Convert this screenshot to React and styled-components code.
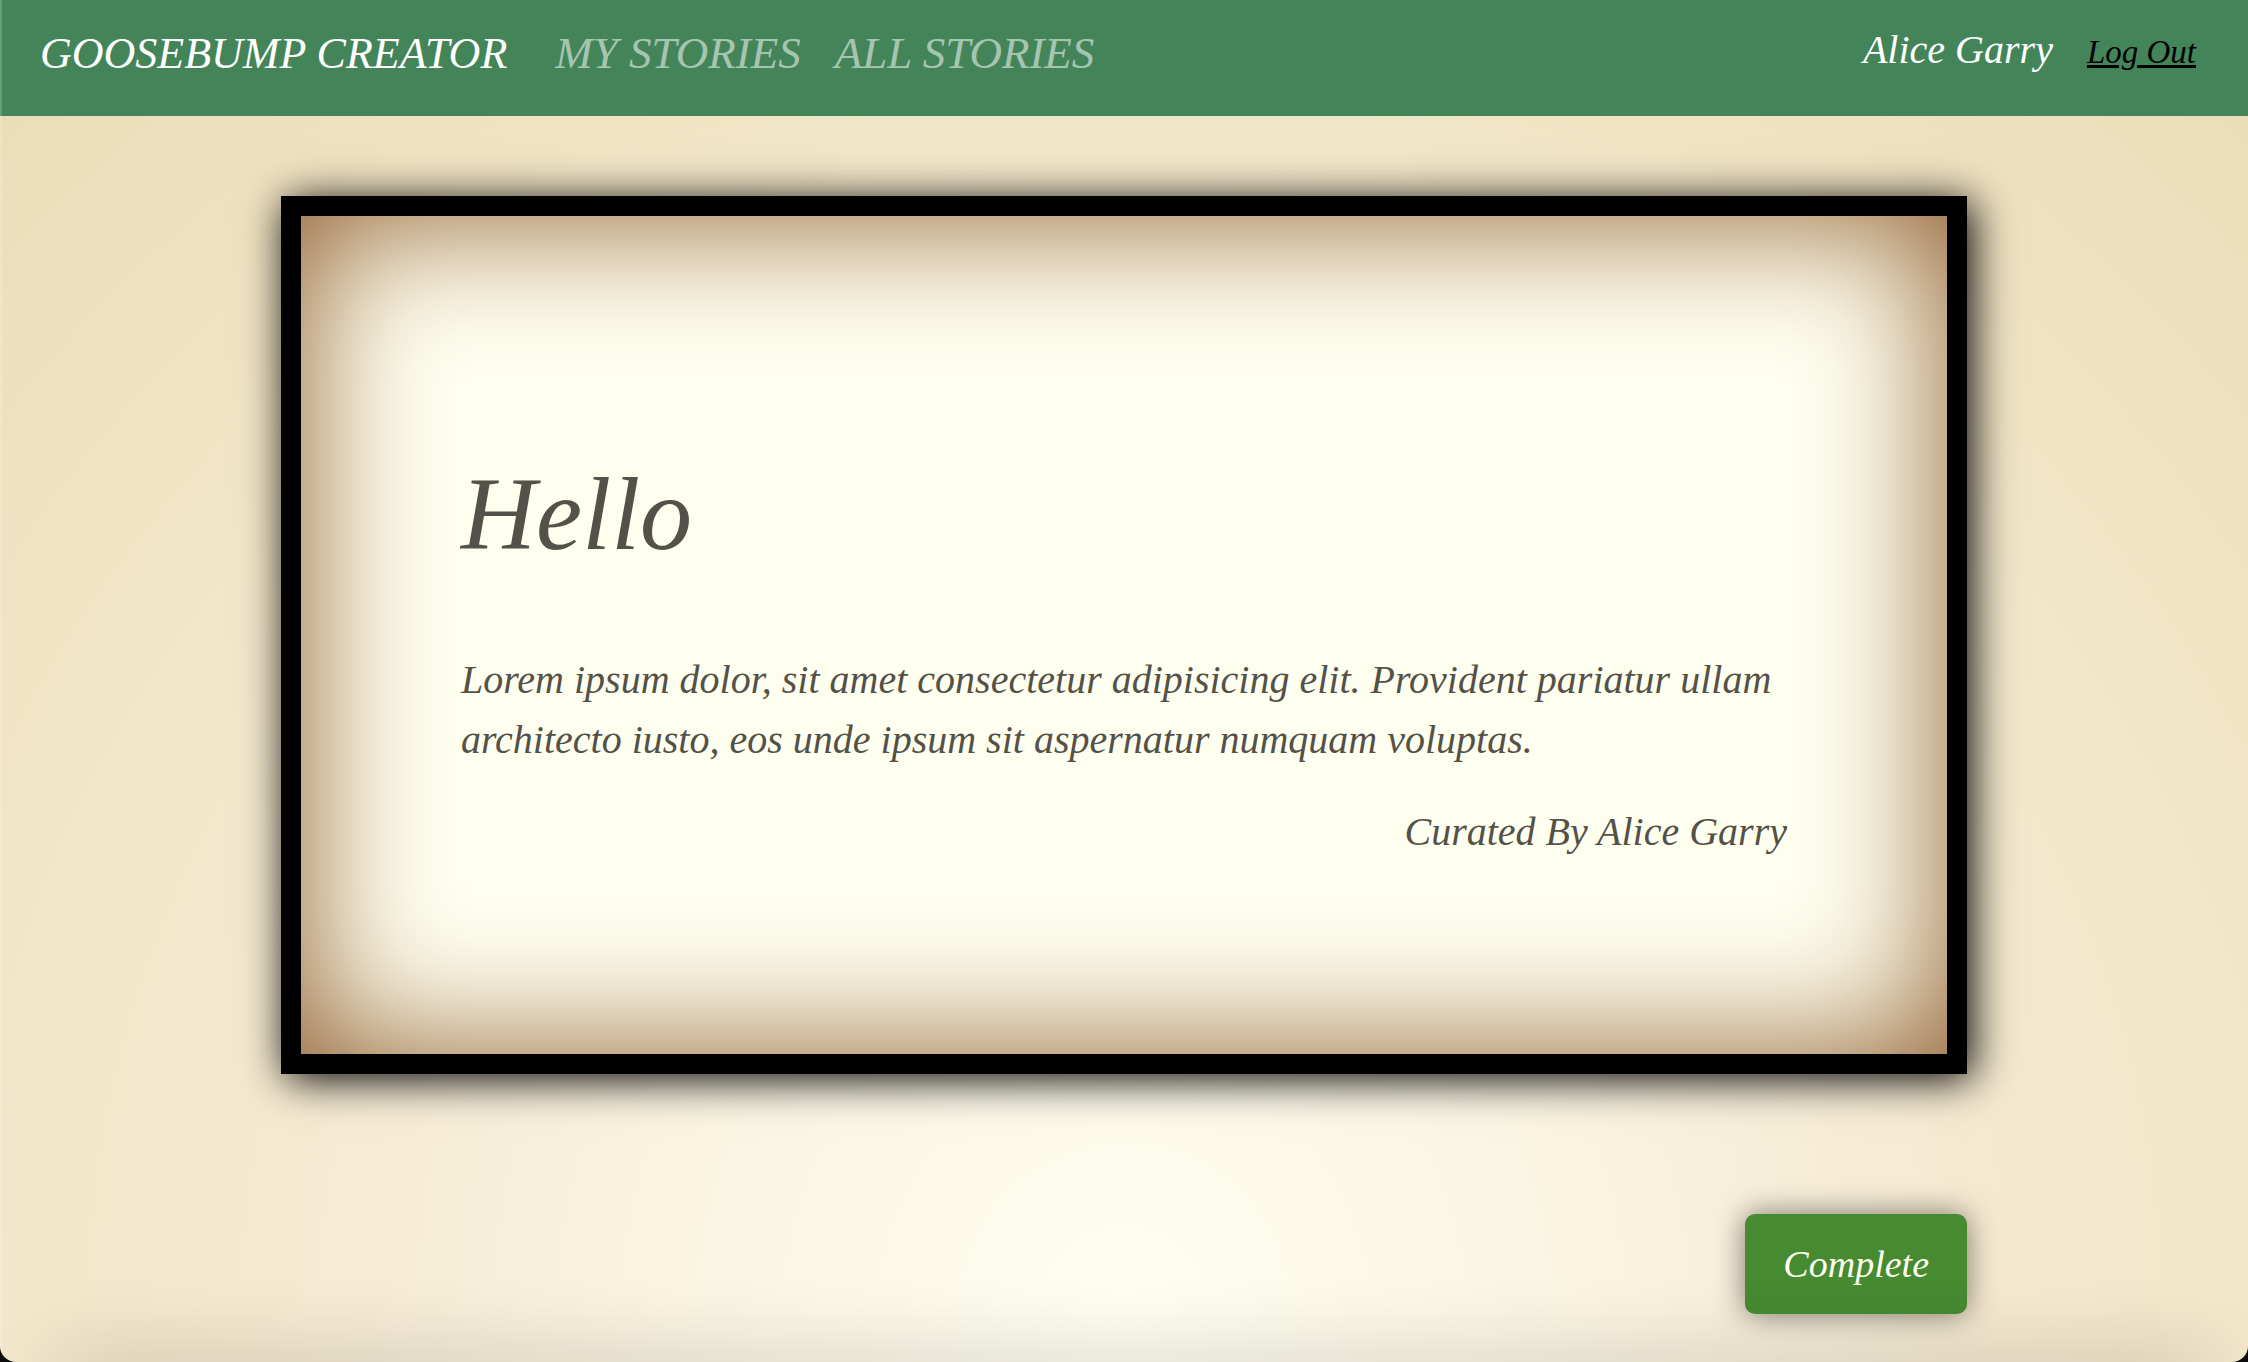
import React from "react";
import styled, { createGlobalStyle } from "styled-components";

const GlobalStyle = createGlobalStyle`
  * {
    box-sizing: border-box;
  }
  html {
    background: #0c0c0c;
  }
  body {
    margin: 0;
    font-family: "Liberation Serif", "Times New Roman", serif;
    font-style: italic;
    font-size: 40px;
  }
  a, button {
    font: inherit;
    color: inherit;
  }
`;

const Page = styled.div`
  position: relative;
  display: flex;
  flex-direction: column;
  min-height: 100vh;
  overflow: hidden;
  border-radius: 0 0 16px 16px;
  background: radial-gradient(
    circle at 50% 96%,
    #fffef0 0,
    #fbf6e4 370px,
    #f6ecd6 740px,
    #f5ead0 860px,
    #f2e7ca 1120px,
    #ecddb9 1640px
  );

  &::before {
    content: "";
    position: absolute;
    inset: 0 auto 0 0;
    width: 2px;
    background: rgba(255, 255, 255, 0.2);
  }
`;

const NavBar = styled.nav`
  display: flex;
  align-items: flex-start;
  justify-content: space-between;
  padding: 24px 52px 33px 40px;
  background: #438559;
`;

const NavGroup = styled.div`
  display: flex;
  align-items: baseline;
  gap: 34px;
  line-height: ${(p) => p.$line};
`;

const Brand = styled.a`
  margin-right: 14px;
  font-size: 44px;
  color: #fff;
  text-decoration: none;
`;

const NavLink = styled.a`
  font-size: 45px;
  color: rgba(255, 255, 255, 0.55);
  text-decoration: none;
`;

const UserName = styled.span`
  color: #fff;
`;

const LogOut = styled.button`
  padding: 0;
  border: 0;
  background: none;
  color: #000;
  font-size: 33px;
  text-decoration: underline;
  cursor: pointer;
`;

const Main = styled.main`
  display: flex;
  flex-direction: column;
  align-items: flex-end;
  gap: 140px;
  width: 75%;
  margin: 80px auto 48px;
`;

const Story = styled.article`
  width: 100%;
  padding: 160px;
  border: 20px solid #000;
  background: #fffff0;
  color: #545148;
  line-height: 60px;
  box-shadow: 5px 5px 40px #000, inset 0 0 140px #8b5828;
`;

const Title = styled.h1`
  margin: 58px 0 56px;
  font-size: 104px;
  font-weight: 400;
  line-height: 160px;
`;

const Body = styled.p`
  margin: 0 0 32px;
`;

const Credit = styled.p`
  margin: 0 0 32px;
  text-align: right;
`;

const CompleteButton = styled.button`
  padding: 20px 38px;
  border: 0;
  border-radius: 10px;
  background: #468a32;
  color: #fffff0;
  font-size: 38px;
  line-height: 60px;
  box-shadow: 0 0 30px rgba(0, 0, 0, 0.5);
  cursor: pointer;
`;

const FooterShade = styled.div`
  height: 40px;
  margin: auto 40px -40px 60px;
  box-shadow: 0 0 80px rgba(0, 0, 0, 0.22);
`;

const links = ["MY STORIES", "ALL STORIES"];

export default function App() {
  return (
    <>
      <GlobalStyle />
      <Page>
        <NavBar>
          <NavGroup $line="58px">
            <Brand href="#home">GOOSEBUMP CREATOR</Brand>
            {links.map((label) => (
              <NavLink key={label} href="#stories">
                {label}
              </NavLink>
            ))}
          </NavGroup>
          <NavGroup $line="52px">
            <UserName>Alice Garry</UserName>
            <LogOut type="button">Log Out</LogOut>
          </NavGroup>
        </NavBar>
        <Main>
          <Story>
            <Title>Hello</Title>
            <Body>
              Lorem ipsum dolor, sit amet consectetur adipisicing elit. Provident
              pariatur ullam architecto iusto, eos unde ipsum sit aspernatur
              numquam voluptas.
            </Body>
            <Credit>Curated By Alice Garry</Credit>
          </Story>
          <CompleteButton type="button">Complete</CompleteButton>
        </Main>
        <FooterShade />
      </Page>
    </>
  );
}
